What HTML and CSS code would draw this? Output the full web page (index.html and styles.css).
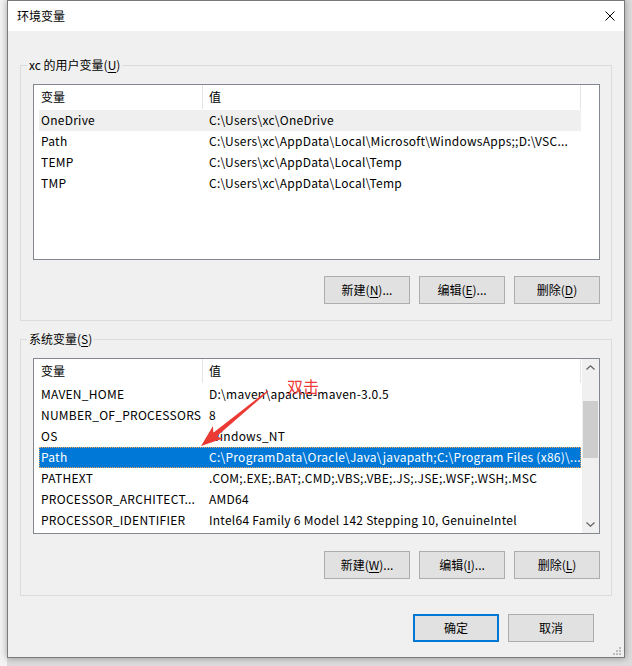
FILE: index.html
```html
<!DOCTYPE html>
<html lang="zh-CN">
<head>
<meta charset="utf-8">
<title>环境变量</title>
<link rel="stylesheet" href="styles.css">
</head>
<body>
<div class="screen">
  <div class="dialog">
    <div class="titlebar">
      <span class="title">环境变量</span>
      <svg class="close" width="10" height="10" viewBox="0 0 10 10"><path d="M0.5 0.5 L9.5 9.5 M9.5 0.5 L0.5 9.5" stroke="#000" stroke-width="1" fill="none"/></svg>
    </div>
    <div class="body">
      <div class="group">
        <span class="legend">xc 的用户变量(<u>U</u>)</span>
        <div class="list">
          <div class="lv">
            <div class="lv-header"><div class="hc1">变量</div><div class="hc2">值</div></div>
            <div class="rows">
              <div class="row hover"><div class="c1">OneDrive</div><div class="c2">C:\Users\xc\OneDrive</div></div>
              <div class="row"><div class="c1">Path</div><div class="c2">C:\Users\xc\AppData\Local\Microsoft\WindowsApps;;D:\VSC...</div></div>
              <div class="row"><div class="c1">TEMP</div><div class="c2">C:\Users\xc\AppData\Local\Temp</div></div>
              <div class="row"><div class="c1">TMP</div><div class="c2">C:\Users\xc\AppData\Local\Temp</div></div>
            </div>
          </div>
        </div>
        <div class="btns">
          <div class="btn">新建(<u>N</u>)...</div>
          <div class="btn">编辑(<u>E</u>)...</div>
          <div class="btn">删除(<u>D</u>)</div>
        </div>
      </div>
      <div class="group sys">
        <span class="legend">系统变量(<u>S</u>)</span>
        <div class="list">
          <div class="lv">
            <div class="lv-header"><div class="hc1">变量</div><div class="hc2">值</div></div>
            <div class="rows">
              <div class="row"><div class="c1">MAVEN_HOME</div><div class="c2">D:\maven\apache-maven-3.0.5</div></div>
              <div class="row"><div class="c1">NUMBER_OF_PROCESSORS</div><div class="c2">8</div></div>
              <div class="row"><div class="c1">OS</div><div class="c2">Windows_NT</div></div>
              <div class="row sel"><div class="c1">Path</div><div class="c2">C:\ProgramData\Oracle\Java\javapath;C:\Program Files (x86)\...</div></div>
              <div class="row"><div class="c1">PATHEXT</div><div class="c2">.COM;.EXE;.BAT;.CMD;.VBS;.VBE;.JS;.JSE;.WSF;.WSH;.MSC</div></div>
              <div class="row"><div class="c1">PROCESSOR_ARCHITECT...</div><div class="c2">AMD64</div></div>
              <div class="row"><div class="c1">PROCESSOR_IDENTIFIER</div><div class="c2">Intel64 Family 6 Model 142 Stepping 10, GenuineIntel</div></div>
            </div>
          </div>
          <div class="vscroll">
            <div class="sb-arrow"><svg width="9" height="5" viewBox="0 0 9 5"><path d="M0.5 4.5 L4.5 0.8 L8.5 4.5" stroke="#606060" stroke-width="1.2" fill="none"/></svg></div>
            <div class="sb-track"><div class="thumb"></div></div>
            <div class="sb-arrow"><svg width="9" height="5" viewBox="0 0 9 5"><path d="M0.5 0.5 L4.5 4.2 L8.5 0.5" stroke="#606060" stroke-width="1.2" fill="none"/></svg></div>
          </div>
        </div>
        <div class="btns">
          <div class="btn">新建(<u>W</u>)...</div>
          <div class="btn">编辑(<u>I</u>)...</div>
          <div class="btn">删除(<u>L</u>)</div>
        </div>
      </div>
      <div class="footer">
        <div class="btn default">确定</div>
        <div class="btn">取消</div>
      </div>
    </div>
    <svg class="grip" width="9" height="9" viewBox="0 0 9 9">
      <rect x="7" y="1" width="2" height="2" fill="#bcbcbc"/>
      <rect x="4" y="4" width="2" height="2" fill="#bcbcbc"/>
      <rect x="7" y="4" width="2" height="2" fill="#bcbcbc"/>
      <rect x="1" y="7" width="2" height="2" fill="#bcbcbc"/>
      <rect x="4" y="7" width="2" height="2" fill="#bcbcbc"/>
      <rect x="7" y="7" width="2" height="2" fill="#bcbcbc"/>
    </svg>
  </div>
  <svg class="annot" width="632" height="666" viewBox="0 0 632 666">
    <polygon points="268.4,391.5 216.5,436.5 223,438.5 201,446 213,426 213.3,432.7 267.6,390.5" fill="#ea3a33"/>
  </svg>
  <span class="note">双击</span>
</div>
</body>
</html>
```
FILE: styles.css
```css
* { box-sizing: border-box; }
html, body { margin: 0; padding: 0; }
body {
  width: 632px;
  height: 666px;
  overflow: hidden;
  font-family: "Noto Sans CJK SC", "Noto Sans", sans-serif;
  font-size: 12px;
  color: #000;
  background: #ececec;
}
u { text-decoration: underline; text-underline-offset: 2px; }

.screen {
  position: relative;
  width: 632px;
  height: 666px;
  background: linear-gradient(to right, #f3f3f3 0 7px, #dcdcdc 7px);
  overflow: hidden;
}

.dialog {
  position: relative;
  margin-left: 7px;
  width: 618px;
  height: 658px;
  border: 1px solid #7a7a7a;
  background: #f0f0f0;
  display: flex;
  flex-direction: column;
  box-shadow: 0 0 7px rgba(0, 0, 0, 0.35);
}

.titlebar {
  height: 30px;
  flex: none;
  background: #fff;
  display: flex;
  align-items: center;
  justify-content: space-between;
  padding: 0 9px 0 9px;
}
.title { line-height: 16px; margin-top: -1px; }
.close { display: block; }

.body {
  flex: 1;
  padding: 34px 12px 0 12px;
}

.group {
  position: relative;
  border: 1px solid #dcdcdc;
  padding: 18px 11px 16px 12px;
}
.group + .group { margin-top: 18px; }
.legend {
  position: absolute;
  top: -9px;
  left: 6px;
  padding: 0 2px;
  line-height: 16px;
  background: #f0f0f0;
}

.list {
  height: 176px;
  border: 1px solid #828790;
  background: #fff;
  display: flex;
  overflow: hidden;
}
.lv { flex: 1; min-width: 0; }
.lv-header { display: flex; height: 25px; }
.hc1, .hc2 {
  line-height: 23px;
  border-right: 1px solid #e5e5e5;
  height: 24px;
}
.hc1 { width: 169px; padding-left: 7px; }
.hc2 { width: 378px; padding-left: 6px; }

.rows { padding-left: 5px; }
.row {
  display: flex;
  width: 542px;
  height: 21px;
  line-height: 19px;
  white-space: nowrap;
  letter-spacing: 0.26px;
}
.c1 { width: 168px; padding-left: 2px; overflow: hidden; }
.c2 { flex: 1; padding-left: 2px; overflow: hidden; }
.row.hover { background: #efefef; }
.row.sel {
  background: #0078d7;
  color: #fff;
  outline: 1px dotted #f2a65a;
  outline-offset: -1px;
}

.vscroll {
  width: 17px;
  flex: none;
  background: #f0f0f0;
  display: flex;
  flex-direction: column;
  align-items: center;
}
.sb-arrow {
  height: 17px;
  width: 17px;
  display: flex;
  align-items: center;
  justify-content: center;
}
.sb-arrow svg { display: block; }
.sb-track { flex: 1; width: 15px; }
.thumb { margin-top: 25px; width: 15px; height: 57px; background: #cdcdcd; }

.btns {
  display: flex;
  justify-content: flex-end;
  gap: 9px;
  margin-top: 16px;
}
.group.sys .btns { margin-top: 17px; }

.btn {
  width: 86px;
  height: 28px;
  background: #e1e1e1;
  border: 1px solid #adadad;
  display: flex;
  align-items: center;
  justify-content: center;
  white-space: nowrap;
  padding-bottom: 2px;
}
.btn.default { border: 2px solid #0078d7; }

.footer {
  display: flex;
  justify-content: flex-end;
  gap: 9px;
  margin-top: 18px;
  padding-right: 18px;
}

.grip {
  position: absolute;
  right: 3px;
  bottom: 2px;
}

.annot {
  position: absolute;
  left: 0;
  top: 0;
  pointer-events: none;
}
.note {
  position: absolute;
  left: 287px;
  top: 377px;
  font-size: 16px;
  line-height: 18px;
  color: #ee3a36;
}
```
